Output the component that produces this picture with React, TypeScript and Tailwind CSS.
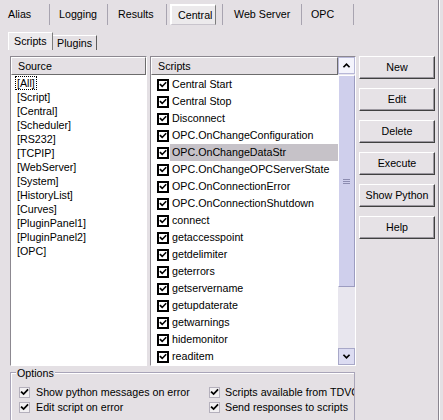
import React from "react"

const tabs = [
  { label: "Alias", w: "w-[50px]", pl: "pl-[8px]" },
  { label: "Logging", w: "w-[58px]", pl: "pl-[9px]" },
  { label: "Results", w: "w-[59px]", pl: "pl-[10px]" },
]

const sources = [
  "[All]",
  "[Script]",
  "[Central]",
  "[Scheduler]",
  "[RS232]",
  "[TCPIP]",
  "[WebServer]",
  "[System]",
  "[HistoryList]",
  "[Curves]",
  "[PluginPanel1]",
  "[PluginPanel2]",
  "[OPC]",
]

const scripts = [
  "Central Start",
  "Central Stop",
  "Disconnect",
  "OPC.OnChangeConfiguration",
  "OPC.OnChangeDataStr",
  "OPC.OnChangeOPCServerState",
  "OPC.OnConnectionError",
  "OPC.OnConnectionShutdown",
  "connect",
  "getaccesspoint",
  "getdelimiter",
  "geterrors",
  "getservername",
  "getupdaterate",
  "getwarnings",
  "hidemonitor",
  "readitem",
]

const buttons = ["New", "Edit", "Delete", "Execute", "Show Python", "Help"]

function Tick({ w = 1.8 }: { w?: number }) {
  return (
    <svg viewBox="0 0 10 10" className="h-full w-full">
      <polyline points="1.8,4.6 4,6.8 8.3,2.3" fill="none" stroke="#000" strokeWidth={w} strokeLinecap="square" />
    </svg>
  )
}

function ListCheck() {
  return (
    <span className="flex h-[12px] w-[12px] shrink-0 border-2 border-black bg-white">
      <Tick w={2} />
    </span>
  )
}

function OptCheck() {
  return (
    <span className="flex h-[11px] w-[11px] shrink-0 border border-[#b4b0bc] bg-[#f2f0f2]">
      <Tick w={1.9} />
    </span>
  )
}

function Chevron({ down }: { down?: boolean }) {
  return (
    <svg viewBox="0 0 10 8" className="h-[7px] w-[9px]">
      <polyline
        points={down ? "1.5,2 5,5.5 8.5,2" : "1.5,6 5,2.5 8.5,6"}
        fill="none"
        stroke="#000"
        strokeWidth="2"
      />
    </svg>
  )
}

export default function App() {
  return (
    <div
      className="relative flex h-[420px] w-[443px] overflow-hidden bg-[#e4e0e4] text-[10.7px] leading-none text-black"
      style={{ fontFamily: '"Liberation Sans", Arial, sans-serif' }}
    >
      <div className="flex w-[438px] flex-col">
        {/* main tabs */}
        <div className="flex h-[28px] items-start">
          {tabs.map((t) => (
            <div
              key={t.label}
              className={`mt-[4px] flex h-[21px] items-center border-r border-[#a8a4b0] ${t.w} ${t.pl}`}
            >
              {t.label}
            </div>
          ))}
          <div className="ml-[3px] mt-[4px] flex h-[21px] w-[46px] items-center border-l-2 border-t-2 border-r border-b border-l-white border-t-white border-r-[#7c7c7c] border-b-[#c8c4cc] bg-[#eceaec] pl-[6px]">
            Central
          </div>
          <div className="ml-[6px] mt-[4px] flex h-[21px] w-[80px] items-center border-l border-r border-[#a8a4b0] pl-[11px]">
            Web Server
          </div>
          <div className="mt-[4px] flex h-[21px] w-[52px] items-center border-r border-[#a8a4b0] pl-[9px]">
            OPC
          </div>
        </div>

        {/* sub tabs */}
        <div className="flex h-[22px] items-end pl-[8px]">
          <div className="flex h-[18px] w-[45px] items-center border-l border-t border-r border-l-white border-t-white border-r-[#7c7c7c] bg-[#eceaec] pl-[5px]">
            Scripts
          </div>
          <div className="flex h-[15px] w-[44px] items-center border-t border-r border-t-white border-r-[#5c5c5c] pl-[4px]">
            Plugins
          </div>
        </div>

        {/* body */}
        <div className="flex gap-[3px] pl-[10px] pt-[6px]">
          {/* source */}
          <div className="flex h-[310px] w-[137px] flex-col border border-t-[#8c8890] border-l-[#8c8890] border-r-white border-b-white bg-white">
            <div className="flex h-[18px] shrink-0 items-center border border-t-white border-l-white border-r-[#6c6c6c] border-b-[#6c6c6c] bg-[#e4e0e4] pl-[6px]">
              Source
            </div>
            <div className="flex flex-col pt-[1px]">
              {sources.map((s, i) => (
                <div key={s} className="flex h-[14px] items-center pl-[5px]">
                  <span className={i === 0 ? "px-[1px] py-[1px] outline outline-1 outline-dotted outline-black" : "px-[1px]"}>
                    {s}
                  </span>
                </div>
              ))}
            </div>
          </div>

          {/* scripts */}
          <div className="flex h-[310px] w-[206px] border border-t-[#8c8890] border-l-[#8c8890] border-r-white border-b-white bg-white">
            <div className="flex flex-1 flex-col overflow-hidden">
              <div className="flex h-[18px] shrink-0 items-center border border-t-white border-l-white border-r-[#6c6c6c] border-b-[#6c6c6c] bg-[#e4e0e4] pl-[6px]">
                Scripts
              </div>
              <div className="flex flex-col pt-[1px]">
                {scripts.map((s, i) => (
                  <div key={s} className="flex h-[17px] items-center pl-[6px]">
                    <ListCheck />
                    <span
                      className={`ml-[1px] flex h-[17px] flex-1 items-center whitespace-nowrap pl-[2px] ${
                        i === 4 ? "bg-[#c6c2c8]" : ""
                      }`}
                    >
                      {s}
                    </span>
                  </div>
                ))}
              </div>
            </div>
            {/* scrollbar */}
            <div className="flex w-[17px] flex-col bg-[#e8e6ee]">
              <div className="flex h-[17px] items-center justify-center border border-[#b8b8d8] bg-[#f4f4fc]">
                <Chevron />
              </div>
              <div className="mt-[1px] flex h-[212px] items-center justify-center border border-l-white border-t-white border-r-[#9c9cc0] border-b-[#9c9cc0] bg-[#cfcfec]">
                <div className="flex w-[7px] flex-col gap-[1px]">
                  <span className="h-[1px] bg-[#8c8cb0]" />
                  <span className="h-[1px] bg-[#8c8cb0]" />
                  <span className="h-[1px] bg-[#8c8cb0]" />
                </div>
              </div>
              <div className="flex-1" />
              <div className="flex h-[17px] items-center justify-center border border-[#a8a8c8] bg-[#dcdcf2]">
                <Chevron down />
              </div>
            </div>
          </div>

          {/* buttons */}
          <div className="flex w-[76px] flex-col gap-[9px]">
            {buttons.map((b) => (
              <div
                key={b}
                className="flex h-[23px] items-center justify-center border border-t-white border-l-white border-r-[#404040] border-b-[#404040] bg-[#e6e2e6] shadow-[inset_-1px_-1px_#9c98a0]"
              >
                {b}
              </div>
            ))}
          </div>
        </div>

        {/* options */}
        <div className="relative ml-[10px] mt-[6px] w-[345px] flex-1 border-l border-t border-r border-[#a8a4b8] pt-[12px] shadow-[inset_1px_1px_#fff]">
          <span className="absolute left-[5px] top-[-5px] bg-[#e4e0e4] px-[1px]">Options</span>
          {[
            ["Show python messages on error", "Scripts available from TDVC"],
            ["Edit script on error", "Send responses to scripts"],
          ].map(([a, b]) => (
            <div key={a} className="flex h-[15px] items-center">
              <div className="flex w-[201px] items-center gap-[6px] pl-[8px]">
                <OptCheck />
                <span className="whitespace-nowrap">{a}</span>
              </div>
              <div className="flex items-center gap-[5px]">
                <OptCheck />
                <span className="w-[129px] overflow-hidden whitespace-nowrap">{b}</span>
              </div>
            </div>
          ))}
        </div>
      </div>
      <div className="h-full w-[5px] border-l border-[#8a8690] shadow-[inset_1px_0_#fff]" />
    </div>
  )
}
